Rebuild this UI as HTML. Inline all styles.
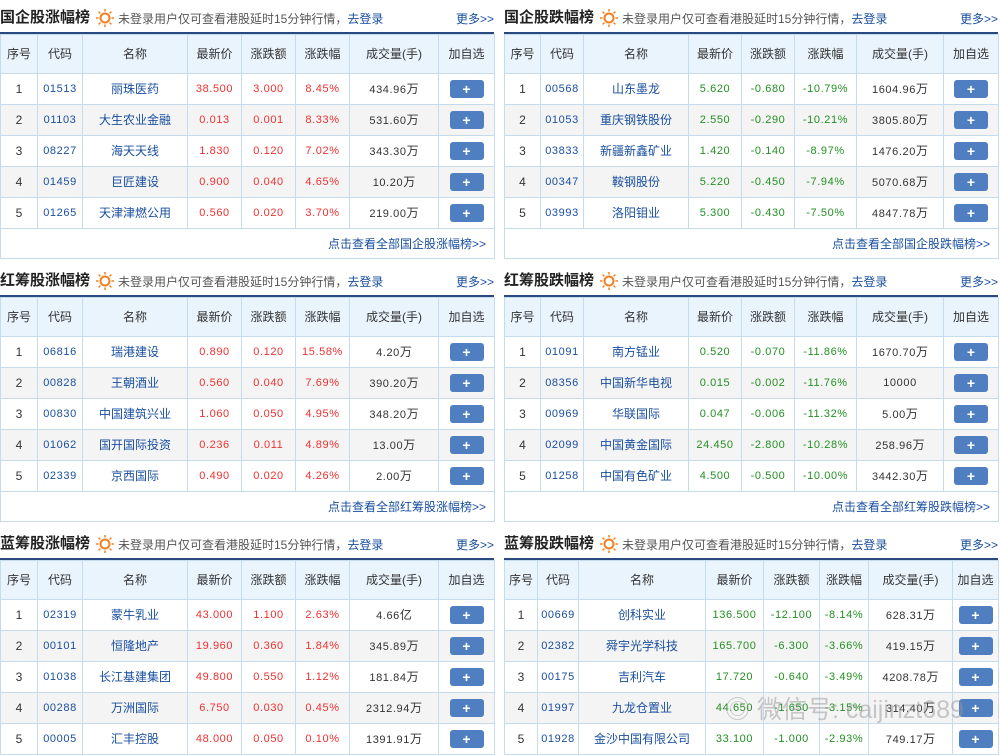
<!DOCTYPE html>
<html><head><meta charset="utf-8"><style>
body{margin:0;width:1000px;height:754px;background:#fff;font-family:"Liberation Sans","Noto Sans CJK SC",sans-serif;font-size:12px;color:#333;position:relative;overflow:hidden}
.sec{position:absolute;width:494px}
.ttl{height:34px;position:relative;border-bottom:2px solid #2a4a7f;box-sizing:border-box}
.ttl b{position:absolute;left:0;top:9px;font-size:15px;color:#222;font-weight:bold;line-height:18px}
.ttl .sun{position:absolute;left:96px;top:9px}
.ttl .tip{position:absolute;left:118px;top:11px;color:#555;font-size:12px;line-height:16px}
.ttl .tip a{color:#1a4fa0}
.ttl .more{position:absolute;right:0;top:11px;color:#1a4fa0;line-height:16px}
table{border-collapse:collapse;table-layout:fixed;width:494px;border:1px solid #c5dbee}
td{border:1px solid #c5dbee;text-align:center;height:30px;padding:0;white-space:nowrap;overflow:hidden;line-height:16px;vertical-align:middle}
tr.h td{background:#e9f4fd;height:38px;color:#333;font-size:12px}
tr.g td{background:#f4f4f4}
.c,.r,.gr,.v{font-family:"Liberation Sans","Noto Sans CJK SC",sans-serif;font-size:11px;letter-spacing:0.6px}
.c{color:#1a4fa0}
.n{color:#1a4fa0;font-size:12px}
.r{color:#f03030}
.gr{color:#229022}
.v{color:#333}
.v i{font-style:normal;font-size:12px;letter-spacing:0}
.b{display:inline-block;width:34px;height:18px;background:#4f7fc0;border-radius:3px;color:#fff;font-weight:bold;font-size:14px;line-height:18px;vertical-align:middle}
tr.f td{text-align:right;padding-right:8px;color:#1a4fa0;height:29px;background:#fff}
.wm{position:absolute;left:725px;top:690px;font-size:25px;color:rgba(150,150,150,.5);font-family:"Liberation Sans","Noto Sans CJK SC",sans-serif}
</style></head><body>

<div class="sec" style="left:0;top:0">
<div class="ttl"><b>国企股涨幅榜</b><svg class="sun" width="18" height="18" viewBox="0 0 18 18"><circle cx="9" cy="9" r="4.5" fill="none" stroke="#f08020" stroke-width="2"/><g stroke="#f08020" stroke-width="1.5"><path d="M9 0v2.5M9 15.5V18M0 9h2.5M15.5 9H18M2.6 2.6l1.8 1.8M13.6 13.6l1.8 1.8M2.6 15.4l1.8-1.8M13.6 4.4l1.8-1.8"/></g></svg><span class="tip">未登录用户仅可查看港股延时15分钟行情，<a>去登录</a></span><span class="more">更多&gt;&gt;</span></div>
<table><colgroup><col width="37"><col width="45"><col width="105"><col width="54"><col width="54"><col width="54"><col width="89"><col width="56"></colgroup>
<tr class="h"><td>序号</td><td>代码</td><td>名称</td><td>最新价</td><td>涨跌额</td><td>涨跌幅</td><td>成交量(手)</td><td>加自选</td></tr>
<tr><td>1</td><td class="c">01513</td><td class="n">丽珠医药</td><td class="r">38.500</td><td class="r">3.000</td><td class="r">8.45%</td><td class="v">434.96<i>万</i></td><td><span class="b">+</span></td></tr>
<tr class="g"><td>2</td><td class="c">01103</td><td class="n">大生农业金融</td><td class="r">0.013</td><td class="r">0.001</td><td class="r">8.33%</td><td class="v">531.60<i>万</i></td><td><span class="b">+</span></td></tr>
<tr><td>3</td><td class="c">08227</td><td class="n">海天天线</td><td class="r">1.830</td><td class="r">0.120</td><td class="r">7.02%</td><td class="v">343.30<i>万</i></td><td><span class="b">+</span></td></tr>
<tr class="g"><td>4</td><td class="c">01459</td><td class="n">巨匠建设</td><td class="r">0.900</td><td class="r">0.040</td><td class="r">4.65%</td><td class="v">10.20<i>万</i></td><td><span class="b">+</span></td></tr>
<tr><td>5</td><td class="c">01265</td><td class="n">天津津燃公用</td><td class="r">0.560</td><td class="r">0.020</td><td class="r">3.70%</td><td class="v">219.00<i>万</i></td><td><span class="b">+</span></td></tr>
<tr class="f"><td colspan="8">点击查看全部国企股涨幅榜&gt;&gt;</td></tr>
</table></div>

<div class="sec" style="left:504px;top:0">
<div class="ttl"><b>国企股跌幅榜</b><svg class="sun" width="18" height="18" viewBox="0 0 18 18"><circle cx="9" cy="9" r="4.5" fill="none" stroke="#f08020" stroke-width="2"/><g stroke="#f08020" stroke-width="1.5"><path d="M9 0v2.5M9 15.5V18M0 9h2.5M15.5 9H18M2.6 2.6l1.8 1.8M13.6 13.6l1.8 1.8M2.6 15.4l1.8-1.8M13.6 4.4l1.8-1.8"/></g></svg><span class="tip">未登录用户仅可查看港股延时15分钟行情，<a>去登录</a></span><span class="more">更多&gt;&gt;</span></div>
<table><colgroup><col width="36"><col width="43"><col width="105"><col width="53"><col width="53"><col width="62"><col width="87"><col width="55"></colgroup>
<tr class="h"><td>序号</td><td>代码</td><td>名称</td><td>最新价</td><td>涨跌额</td><td>涨跌幅</td><td>成交量(手)</td><td>加自选</td></tr>
<tr><td>1</td><td class="c">00568</td><td class="n">山东墨龙</td><td class="gr">5.620</td><td class="gr">-0.680</td><td class="gr">-10.79%</td><td class="v">1604.96<i>万</i></td><td><span class="b">+</span></td></tr>
<tr class="g"><td>2</td><td class="c">01053</td><td class="n">重庆钢铁股份</td><td class="gr">2.550</td><td class="gr">-0.290</td><td class="gr">-10.21%</td><td class="v">3805.80<i>万</i></td><td><span class="b">+</span></td></tr>
<tr><td>3</td><td class="c">03833</td><td class="n">新疆新鑫矿业</td><td class="gr">1.420</td><td class="gr">-0.140</td><td class="gr">-8.97%</td><td class="v">1476.20<i>万</i></td><td><span class="b">+</span></td></tr>
<tr class="g"><td>4</td><td class="c">00347</td><td class="n">鞍钢股份</td><td class="gr">5.220</td><td class="gr">-0.450</td><td class="gr">-7.94%</td><td class="v">5070.68<i>万</i></td><td><span class="b">+</span></td></tr>
<tr><td>5</td><td class="c">03993</td><td class="n">洛阳钼业</td><td class="gr">5.300</td><td class="gr">-0.430</td><td class="gr">-7.50%</td><td class="v">4847.78<i>万</i></td><td><span class="b">+</span></td></tr>
<tr class="f"><td colspan="8">点击查看全部国企股跌幅榜&gt;&gt;</td></tr>
</table></div>

<div class="sec" style="left:0;top:263px">
<div class="ttl"><b>红筹股涨幅榜</b><svg class="sun" width="18" height="18" viewBox="0 0 18 18"><circle cx="9" cy="9" r="4.5" fill="none" stroke="#f08020" stroke-width="2"/><g stroke="#f08020" stroke-width="1.5"><path d="M9 0v2.5M9 15.5V18M0 9h2.5M15.5 9H18M2.6 2.6l1.8 1.8M13.6 13.6l1.8 1.8M2.6 15.4l1.8-1.8M13.6 4.4l1.8-1.8"/></g></svg><span class="tip">未登录用户仅可查看港股延时15分钟行情，<a>去登录</a></span><span class="more">更多&gt;&gt;</span></div>
<table><colgroup><col width="37"><col width="45"><col width="105"><col width="54"><col width="54"><col width="54"><col width="89"><col width="56"></colgroup>
<tr class="h"><td>序号</td><td>代码</td><td>名称</td><td>最新价</td><td>涨跌额</td><td>涨跌幅</td><td>成交量(手)</td><td>加自选</td></tr>
<tr><td>1</td><td class="c">06816</td><td class="n">瑞港建设</td><td class="r">0.890</td><td class="r">0.120</td><td class="r">15.58%</td><td class="v">4.20<i>万</i></td><td><span class="b">+</span></td></tr>
<tr class="g"><td>2</td><td class="c">00828</td><td class="n">王朝酒业</td><td class="r">0.560</td><td class="r">0.040</td><td class="r">7.69%</td><td class="v">390.20<i>万</i></td><td><span class="b">+</span></td></tr>
<tr><td>3</td><td class="c">00830</td><td class="n">中国建筑兴业</td><td class="r">1.060</td><td class="r">0.050</td><td class="r">4.95%</td><td class="v">348.20<i>万</i></td><td><span class="b">+</span></td></tr>
<tr class="g"><td>4</td><td class="c">01062</td><td class="n">国开国际投资</td><td class="r">0.236</td><td class="r">0.011</td><td class="r">4.89%</td><td class="v">13.00<i>万</i></td><td><span class="b">+</span></td></tr>
<tr><td>5</td><td class="c">02339</td><td class="n">京西国际</td><td class="r">0.490</td><td class="r">0.020</td><td class="r">4.26%</td><td class="v">2.00<i>万</i></td><td><span class="b">+</span></td></tr>
<tr class="f"><td colspan="8">点击查看全部红筹股涨幅榜&gt;&gt;</td></tr>
</table></div>

<div class="sec" style="left:504px;top:263px">
<div class="ttl"><b>红筹股跌幅榜</b><svg class="sun" width="18" height="18" viewBox="0 0 18 18"><circle cx="9" cy="9" r="4.5" fill="none" stroke="#f08020" stroke-width="2"/><g stroke="#f08020" stroke-width="1.5"><path d="M9 0v2.5M9 15.5V18M0 9h2.5M15.5 9H18M2.6 2.6l1.8 1.8M13.6 13.6l1.8 1.8M2.6 15.4l1.8-1.8M13.6 4.4l1.8-1.8"/></g></svg><span class="tip">未登录用户仅可查看港股延时15分钟行情，<a>去登录</a></span><span class="more">更多&gt;&gt;</span></div>
<table><colgroup><col width="36"><col width="43"><col width="105"><col width="53"><col width="53"><col width="62"><col width="87"><col width="55"></colgroup>
<tr class="h"><td>序号</td><td>代码</td><td>名称</td><td>最新价</td><td>涨跌额</td><td>涨跌幅</td><td>成交量(手)</td><td>加自选</td></tr>
<tr><td>1</td><td class="c">01091</td><td class="n">南方锰业</td><td class="gr">0.520</td><td class="gr">-0.070</td><td class="gr">-11.86%</td><td class="v">1670.70<i>万</i></td><td><span class="b">+</span></td></tr>
<tr class="g"><td>2</td><td class="c">08356</td><td class="n">中国新华电视</td><td class="gr">0.015</td><td class="gr">-0.002</td><td class="gr">-11.76%</td><td class="v">10000</td><td><span class="b">+</span></td></tr>
<tr><td>3</td><td class="c">00969</td><td class="n">华联国际</td><td class="gr">0.047</td><td class="gr">-0.006</td><td class="gr">-11.32%</td><td class="v">5.00<i>万</i></td><td><span class="b">+</span></td></tr>
<tr class="g"><td>4</td><td class="c">02099</td><td class="n">中国黄金国际</td><td class="gr">24.450</td><td class="gr">-2.800</td><td class="gr">-10.28%</td><td class="v">258.96<i>万</i></td><td><span class="b">+</span></td></tr>
<tr><td>5</td><td class="c">01258</td><td class="n">中国有色矿业</td><td class="gr">4.500</td><td class="gr">-0.500</td><td class="gr">-10.00%</td><td class="v">3442.30<i>万</i></td><td><span class="b">+</span></td></tr>
<tr class="f"><td colspan="8">点击查看全部红筹股跌幅榜&gt;&gt;</td></tr>
</table></div>

<div class="sec" style="left:0;top:526px">
<div class="ttl"><b>蓝筹股涨幅榜</b><svg class="sun" width="18" height="18" viewBox="0 0 18 18"><circle cx="9" cy="9" r="4.5" fill="none" stroke="#f08020" stroke-width="2"/><g stroke="#f08020" stroke-width="1.5"><path d="M9 0v2.5M9 15.5V18M0 9h2.5M15.5 9H18M2.6 2.6l1.8 1.8M13.6 13.6l1.8 1.8M2.6 15.4l1.8-1.8M13.6 4.4l1.8-1.8"/></g></svg><span class="tip">未登录用户仅可查看港股延时15分钟行情，<a>去登录</a></span><span class="more">更多&gt;&gt;</span></div>
<table><colgroup><col width="37"><col width="45"><col width="105"><col width="54"><col width="54"><col width="54"><col width="89"><col width="56"></colgroup>
<tr class="h"><td>序号</td><td>代码</td><td>名称</td><td>最新价</td><td>涨跌额</td><td>涨跌幅</td><td>成交量(手)</td><td>加自选</td></tr>
<tr><td>1</td><td class="c">02319</td><td class="n">蒙牛乳业</td><td class="r">43.000</td><td class="r">1.100</td><td class="r">2.63%</td><td class="v">4.66<i>亿</i></td><td><span class="b">+</span></td></tr>
<tr class="g"><td>2</td><td class="c">00101</td><td class="n">恒隆地产</td><td class="r">19.960</td><td class="r">0.360</td><td class="r">1.84%</td><td class="v">345.89<i>万</i></td><td><span class="b">+</span></td></tr>
<tr><td>3</td><td class="c">01038</td><td class="n">长江基建集团</td><td class="r">49.800</td><td class="r">0.550</td><td class="r">1.12%</td><td class="v">181.84<i>万</i></td><td><span class="b">+</span></td></tr>
<tr class="g"><td>4</td><td class="c">00288</td><td class="n">万洲国际</td><td class="r">6.750</td><td class="r">0.030</td><td class="r">0.45%</td><td class="v">2312.94<i>万</i></td><td><span class="b">+</span></td></tr>
<tr><td>5</td><td class="c">00005</td><td class="n">汇丰控股</td><td class="r">48.000</td><td class="r">0.050</td><td class="r">0.10%</td><td class="v">1391.91<i>万</i></td><td><span class="b">+</span></td></tr>
</table></div>

<div class="sec" style="left:504px;top:526px">
<div class="ttl"><b>蓝筹股跌幅榜</b><svg class="sun" width="18" height="18" viewBox="0 0 18 18"><circle cx="9" cy="9" r="4.5" fill="none" stroke="#f08020" stroke-width="2"/><g stroke="#f08020" stroke-width="1.5"><path d="M9 0v2.5M9 15.5V18M0 9h2.5M15.5 9H18M2.6 2.6l1.8 1.8M13.6 13.6l1.8 1.8M2.6 15.4l1.8-1.8M13.6 4.4l1.8-1.8"/></g></svg><span class="tip">未登录用户仅可查看港股延时15分钟行情，<a>去登录</a></span><span class="more">更多&gt;&gt;</span></div>
<table><colgroup><col width="33"><col width="41"><col width="127"><col width="58"><col width="56"><col width="49"><col width="84"><col width="46"></colgroup>
<tr class="h"><td>序号</td><td>代码</td><td>名称</td><td>最新价</td><td>涨跌额</td><td>涨跌幅</td><td>成交量(手)</td><td>加自选</td></tr>
<tr><td>1</td><td class="c">00669</td><td class="n">创科实业</td><td class="gr">136.500</td><td class="gr">-12.100</td><td class="gr">-8.14%</td><td class="v">628.31<i>万</i></td><td><span class="b">+</span></td></tr>
<tr class="g"><td>2</td><td class="c">02382</td><td class="n">舜宇光学科技</td><td class="gr">165.700</td><td class="gr">-6.300</td><td class="gr">-3.66%</td><td class="v">419.15<i>万</i></td><td><span class="b">+</span></td></tr>
<tr><td>3</td><td class="c">00175</td><td class="n">吉利汽车</td><td class="gr">17.720</td><td class="gr">-0.640</td><td class="gr">-3.49%</td><td class="v">4208.78<i>万</i></td><td><span class="b">+</span></td></tr>
<tr class="g"><td>4</td><td class="c">01997</td><td class="n">九龙仓置业</td><td class="gr">44.650</td><td class="gr">-1.650</td><td class="gr">-3.15%</td><td class="v">314.40<i>万</i></td><td><span class="b">+</span></td></tr>
<tr><td>5</td><td class="c">01928</td><td class="n">金沙中国有限公司</td><td class="gr">33.100</td><td class="gr">-1.000</td><td class="gr">-2.93%</td><td class="v">749.17<i>万</i></td><td><span class="b">+</span></td></tr>
</table></div>

<div class="wm">◎ 微信号: caijinzt689</div>
</body></html>
